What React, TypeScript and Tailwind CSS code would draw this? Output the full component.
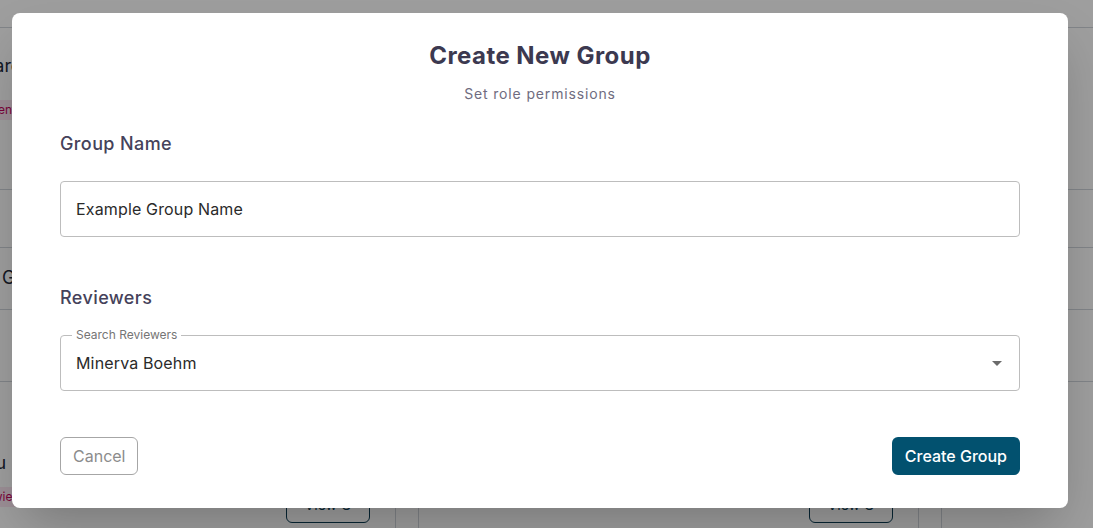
import React from "react";

const font = { fontFamily: "Inter, 'Noto Sans', sans-serif" };

const BgCard = ({ top = true, bottom = true }: { top?: boolean; bottom?: boolean }) => (
    <div className="w-[501px] shrink-0 border-x border-gray-300 flex flex-col">
        <div className="h-[162px] border-b border-gray-300 pl-[49px] pr-6 pt-6 flex flex-col items-start gap-5">
            {top && <div className="text-lg text-gray-800">Standard</div>}
            {top && <div className="bg-pink-100 text-pink-700 text-xs px-1 py-0.5 rounded">Department</div>}
        </div>
        <div className="h-[58px] border-b border-gray-300 text-lg text-gray-800 pl-[45px] pt-4">{top && 'Group'}</div>
        <div className="h-[62px] border-b border-gray-300 text-lg text-gray-800 pl-[106px] pt-4">{top && 'G'}</div>
        <div className="h-[72px] border-b border-gray-300"></div>
        <div className="h-[150px] pl-[62px] pr-[25px] pt-[67px] flex flex-col gap-[10px]">
            <div className="h-7 text-lg leading-7 text-gray-800">{top && 'Menu'}</div>
            {bottom && (
                <div className="flex items-start justify-between">
                    <div className="bg-pink-100 text-pink-700 text-xs leading-5 px-1 rounded">{top && 'Reviewier'}</div>
                    <div className="border border-[#0b3d55] rounded-md w-[84px] h-[36px] flex items-center justify-center text-[#0b3d55] text-sm">View G</div>
                </div>
            )}
        </div>
    </div>
);

const App = () => {
    return (
        <div className="relative w-[1093px] h-[528px] overflow-hidden bg-white" style={font}>
            <div className="flex flex-col">
                <div className="h-[28px] border-b border-gray-300"></div>
                <div className="flex gap-[22px] -ml-[105px]">
                    <BgCard />
                    <BgCard top={false} />
                    <BgCard top={false} bottom={false} />
                </div>
            </div>

            <div className="absolute inset-0 bg-black/[0.38] flex items-start justify-start pt-[13px] pl-[12px]">
                <div className="w-[1056px] h-[495px] bg-white rounded-lg shadow-2xl px-12 pt-[27px] flex flex-col">
                    <h2 className="text-2xl leading-8 font-bold text-[#3c3950] text-center tracking-[0.45px]">Create New Group</h2>
                    <p className="mt-3 text-sm leading-5 text-[#6f6c80] text-center tracking-[0.85px]">Set role permissions</p>

                    <div className="mt-[26px] text-lg leading-7 font-medium text-[#45425a] tracking-[0.4px]">Group Name</div>
                    <div className="mt-[23px] h-[56px] border border-[#bdbdbd] rounded flex items-center px-[15px]">
                        <span className="text-base text-[#2a2a2a] tracking-[0.15px]">Example Group Name</span>
                    </div>

                    <div className="mt-[47px] text-lg leading-7 font-medium text-[#45425a] tracking-[0.4px]">Reviewers</div>
                    <div className="mt-[23px] relative h-[56px] border border-[#bdbdbd] rounded flex items-center px-[15px]">
                        <span className="absolute -top-[9px] left-[11px] bg-white px-1 text-xs leading-4 text-[#757575]">Search Reviewers</span>
                        <span className="flex-1 text-base text-[#2a2a2a] tracking-[0.15px]">Minerva Boehm</span>
                        <svg width="24" height="24" viewBox="0 0 24 24" className="mr-[-5px] text-[#6b6b6b]">
                            <path d="M7 10l5 5 5-5z" fill="currentColor" />
                        </svg>
                    </div>

                    <div className="mt-[46px] flex justify-between items-center">
                        <button className="h-[38px] px-[12px] border border-[#a6a6a6] rounded-md text-base text-[#8c8c8c] bg-white">
                            Cancel
                        </button>
                        <button className="h-[38px] px-[13px] rounded-md text-base font-medium text-white bg-[#02516f]">
                            Create Group
                        </button>
                    </div>
                </div>
            </div>
        </div>
    );
};

export default App;
